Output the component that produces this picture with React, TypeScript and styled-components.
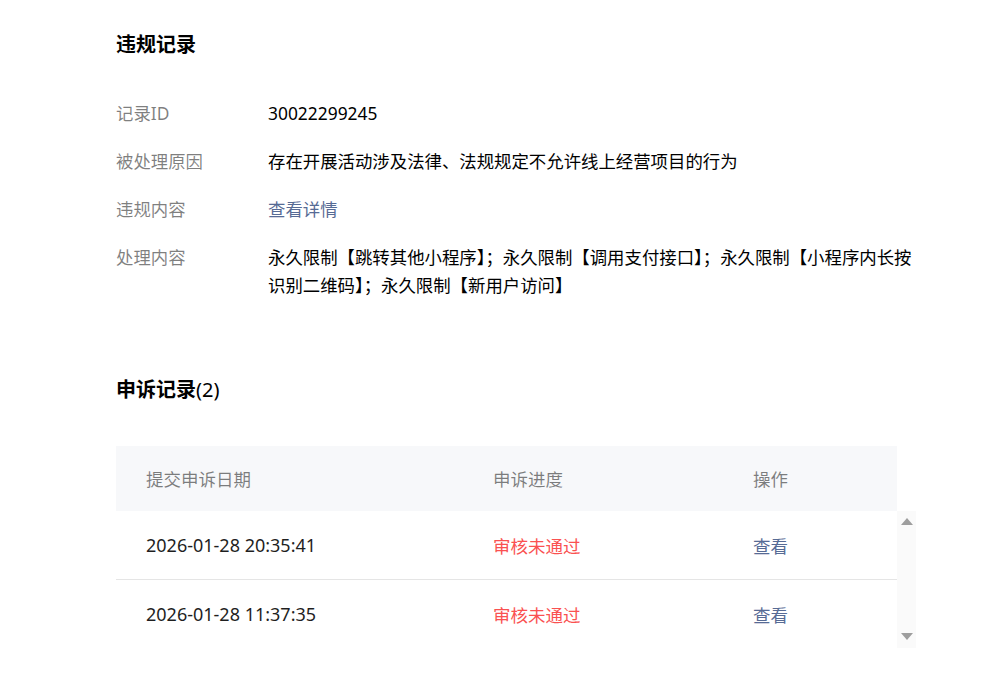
import React from 'react'
import styled, { createGlobalStyle } from 'styled-components'

const GlobalStyle = createGlobalStyle`
  body {
    margin: 0;
    background: #fff;
    font-family: "Noto Sans", "Noto Sans CJK SC", sans-serif;
    color: #191919;
  }
`

const Page = styled.div`
  padding: 31px 0 40px 116px;
`

const SectionTitle = styled.h2<{ gap: number }>`
  margin: 0 0 ${p => p.gap}px;
  font-size: 20px;
  font-weight: 700;
  line-height: 28px;
  color: #000;
`

const Count = styled.span`
  font-weight: 400;
`

const InfoList = styled.div`
  display: flex;
  flex-direction: column;
  gap: 20px;
  margin-bottom: 77px;
`

const InfoRow = styled.div`
  display: grid;
  grid-template-columns: 152px 652px;
  font-size: 17.4px;
  line-height: 28px;
`

const Label = styled.div`
  color: rgba(0, 0, 0, 0.5);
`

const Value = styled.div<{ link?: boolean }>`
  color: ${p => (p.link ? '#576b95' : '#000')};
`

const Table = styled.div`
  font-size: 17.5px;
`

const Cols = styled.div`
  display: grid;
  grid-template-columns: 347px 260px 174px;
  align-items: center;

  & > div {
    padding-left: 30px;
  }
`

const HeadRow = styled(Cols)`
  width: 781px;
  height: 65px;
  background: #f7f8fa;
  color: rgba(0, 0, 0, 0.5);
`

const BodyWrap = styled.div`
  display: flex;
  width: 800px;
`

const Rows = styled.div`
  width: 781px;
  flex-shrink: 0;
`

const Row = styled(Cols)<{ last?: boolean }>`
  height: 68px;
  border-bottom: ${p => (p.last ? 'none' : '1px solid #e5e5e5')};
  color: #1f1f1f;
`

const DateCell = styled.div`
  font-size: 18px;
`

const Status = styled.div`
  color: #fa5151;
`

const Action = styled.div`
  color: #576b95;
`

const Scrollbar = styled.div`
  width: 19px;
  height: 137px;
  background: #fafafa;
  display: flex;
  flex-direction: column;
  justify-content: space-between;
  align-items: center;
  padding: 7px 0 8px;
  box-sizing: border-box;
`

const Arrow = styled.span<{ down?: boolean }>`
  width: 0;
  height: 0;
  border-left: 6px solid transparent;
  border-right: 6px solid transparent;
  ${p =>
    p.down
      ? 'border-top: 7px solid #9e9e9e;'
      : 'border-bottom: 7px solid #9e9e9e;'}
`

const appeals = [
  { date: '2026-01-28 20:35:41', status: '审核未通过' },
  { date: '2026-01-28 11:37:35', status: '审核未通过' },
]

export default function App() {
  return (
    <Page>
      <GlobalStyle />
      <SectionTitle gap={40}>违规记录</SectionTitle>
      <InfoList>
        <InfoRow>
          <Label>记录ID</Label>
          <Value>30022299245</Value>
        </InfoRow>
        <InfoRow>
          <Label>被处理原因</Label>
          <Value>存在开展活动涉及法律、法规规定不允许线上经营项目的行为</Value>
        </InfoRow>
        <InfoRow>
          <Label>违规内容</Label>
          <Value link>查看详情</Value>
        </InfoRow>
        <InfoRow>
          <Label>处理内容</Label>
          <Value>
            永久限制【跳转其他小程序】；永久限制【调用支付接口】；永久限制【小程序内长按识别二维码】；永久限制【新用户访问】
          </Value>
        </InfoRow>
      </InfoList>

      <SectionTitle gap={42}>
        申诉记录<Count>(2)</Count>
      </SectionTitle>
      <Table>
        <HeadRow>
          <div>提交申诉日期</div>
          <div>申诉进度</div>
          <div>操作</div>
        </HeadRow>
        <BodyWrap>
          <Rows>
            {appeals.map((a, i) => (
              <Row key={a.date} last={i === appeals.length - 1}>
                <DateCell>{a.date}</DateCell>
                <Status>{a.status}</Status>
                <Action>查看</Action>
              </Row>
            ))}
          </Rows>
          <Scrollbar>
            <Arrow />
            <Arrow down />
          </Scrollbar>
        </BodyWrap>
      </Table>
    </Page>
  )
}
